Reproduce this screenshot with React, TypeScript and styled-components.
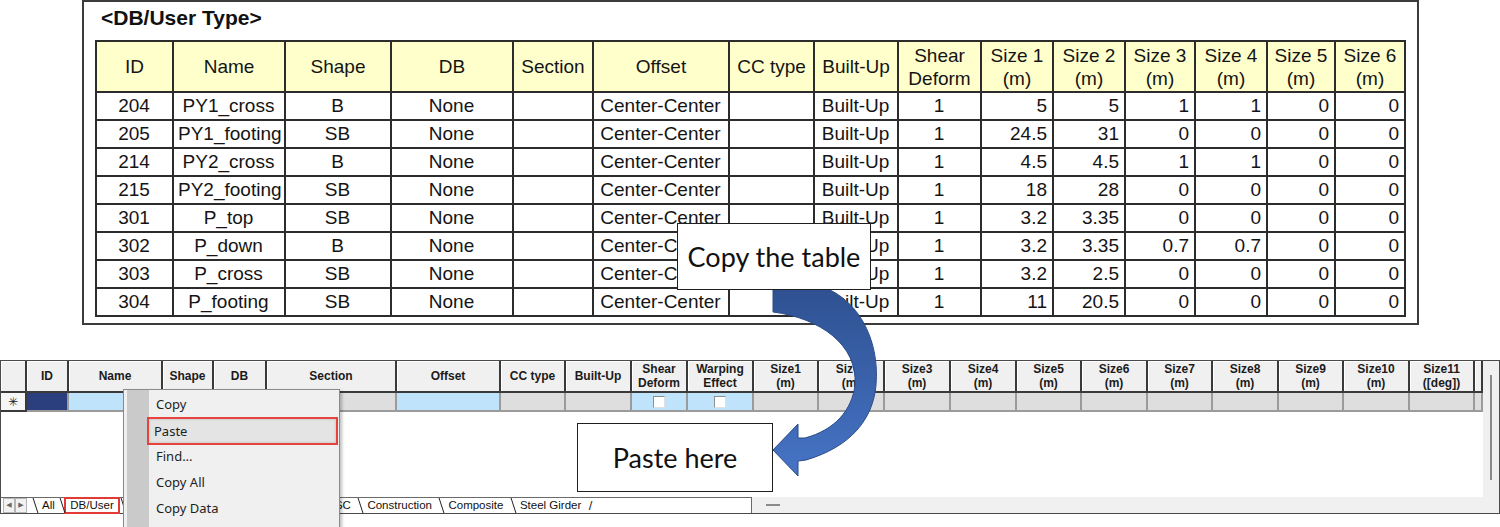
import React from "react";
import styled, { createGlobalStyle } from "styled-components";

const GlobalStyle = createGlobalStyle`
  html, body {
    margin: 0;
    padding: 0;
    background: #fff;
  }
  body {
    font-family: "Liberation Sans", Arial, sans-serif;
  }
`;

/* ---------- data ---------- */

const sampleHead: string[][] = [
  ["ID"],
  ["Name"],
  ["Shape"],
  ["DB"],
  ["Section"],
  ["Offset"],
  ["CC type"],
  ["Built-Up"],
  ["Shear", "Deform"],
  ["Size 1", "(m)"],
  ["Size 2", "(m)"],
  ["Size 3", "(m)"],
  ["Size 4", "(m)"],
  ["Size 5", "(m)"],
  ["Size 6", "(m)"],
];
const sampleWidths = [77, 112, 106, 122, 80, 136, 85, 84, 83, 72, 72, 70, 72, 68, 70];

const sampleRows: string[][] = [
  ["204", "PY1_cross", "B", "None", "", "Center-Center", "", "Built-Up", "1", "5", "5", "1", "1", "0", "0"],
  ["205", "PY1_footing", "SB", "None", "", "Center-Center", "", "Built-Up", "1", "24.5", "31", "0", "0", "0", "0"],
  ["214", "PY2_cross", "B", "None", "", "Center-Center", "", "Built-Up", "1", "4.5", "4.5", "1", "1", "0", "0"],
  ["215", "PY2_footing", "SB", "None", "", "Center-Center", "", "Built-Up", "1", "18", "28", "0", "0", "0", "0"],
  ["301", "P_top", "SB", "None", "", "Center-Center", "", "Built-Up", "1", "3.2", "3.35", "0", "0", "0", "0"],
  ["302", "P_down", "B", "None", "", "Center-Center", "", "Built-Up", "1", "3.2", "3.35", "0.7", "0.7", "0", "0"],
  ["303", "P_cross", "SB", "None", "", "Center-Center", "", "Built-Up", "1", "3.2", "2.5", "0", "0", "0", "0"],
  ["304", "P_footing", "SB", "None", "", "Center-Center", "", "Built-Up", "1", "11", "20.5", "0", "0", "0", "0"],
];

type Tone = "corner" | "navy" | "blue" | "gray" | "check";

const gridColumns: { label: string[]; width: number; tone: Tone }[] = [
  { label: [], width: 26, tone: "corner" },
  { label: ["ID"], width: 42, tone: "navy" },
  { label: ["Name"], width: 94, tone: "blue" },
  { label: ["Shape"], width: 51, tone: "gray" },
  { label: ["DB"], width: 53, tone: "gray" },
  { label: ["Section"], width: 130, tone: "gray" },
  { label: ["Offset"], width: 104, tone: "blue" },
  { label: ["CC type"], width: 65, tone: "gray" },
  { label: ["Built-Up"], width: 66, tone: "gray" },
  { label: ["Shear", "Deform"], width: 56, tone: "check" },
  { label: ["Warping", "Effect"], width: 66, tone: "check" },
  { label: ["Size1", "(m)"], width: 65, tone: "gray" },
  { label: ["Size2", "(m)"], width: 66, tone: "gray" },
  { label: ["Size3", "(m)"], width: 66, tone: "gray" },
  { label: ["Size4", "(m)"], width: 66, tone: "gray" },
  { label: ["Size5", "(m)"], width: 65, tone: "gray" },
  { label: ["Size6", "(m)"], width: 66, tone: "gray" },
  { label: ["Size7", "(m)"], width: 65, tone: "gray" },
  { label: ["Size8", "(m)"], width: 66, tone: "gray" },
  { label: ["Size9", "(m)"], width: 65, tone: "gray" },
  { label: ["Size10", "(m)"], width: 66, tone: "gray" },
  { label: ["Size11", "([deg])"], width: 65, tone: "gray" },
  { label: [], width: 8, tone: "gray" },
];
const gridTemplate = gridColumns.map((c) => `${c.width}px`).join(" ");

const sheetTabs = ["All", "DB/User", "Value", "Steel", "SRC", "Combined", "PSC", "Construction", "Composite", "Steel Girder"];

const menuItems = ["Copy", "Paste", "Find...", "Copy All", "Copy Data"];

/* ---------- page ---------- */

const Page = styled.div`
  position: relative;
  width: 1500px;
  height: 527px;
  overflow: hidden;
  background: #fff;
`;

/* ---------- sample table (top) ---------- */

const SamplePanel = styled.section`
  box-sizing: border-box;
  margin-left: 82px;
  width: 1337px;
  height: 325px;
  border: 2px solid #3c3c3c;
  padding: 4px 0 0 11px;
`;

const PanelTitle = styled.h2`
  margin: 0 0 10px 6px;
  font: bold 21px/24px "Liberation Sans", Arial, sans-serif;
  color: #111;
`;

const SampleTable = styled.table`
  border-collapse: collapse;
  table-layout: fixed;
  width: 1309px;
  font-family: "Liberation Sans", Arial, sans-serif;
  font-size: 19px;
  color: #141414;
`;

const HeadRow = styled.tr`
  height: 51px;
`;

const BodyRow = styled.tr`
  height: 28px;
`;

const HeadCell = styled.th`
  padding: 0;
  background: #ffffcc;
  border: 2px solid #2c2c2c;
  font-weight: normal;
  line-height: 23px;
  text-align: center;
`;

const BodyCell = styled.td<{ $align: "center" | "right" }>`
  padding: 0 5px 0 4px;
  border: 2px solid #2c2c2c;
  line-height: 24px;
  text-align: ${(p) => p.$align};
  white-space: nowrap;
`;

/* ---------- spreadsheet (bottom) ---------- */

const Sheet = styled.section`
  box-sizing: border-box;
  width: 1500px;
  height: 154px;
  margin-top: 35px;
  border: 1px solid #4a4a4a;
  display: flex;
  flex-direction: column;
`;

const SheetBody = styled.div`
  display: flex;
  height: 136px;
`;

const GridArea = styled.div`
  flex: 1;
  background: #fff;
`;

const GridRow = styled.div<{ $height: number }>`
  display: grid;
  grid-template-columns: ${gridTemplate};
  height: ${(p) => p.$height}px;
`;

const ColumnHead = styled.div`
  box-sizing: border-box;
  display: flex;
  align-items: center;
  justify-content: center;
  flex-direction: column;
  background: #f0f0f0;
  border-right: 2px solid #3a3a3a;
  border-bottom: 2px solid #3a3a3a;
  box-shadow: inset 1px 1px 0 #fff;
  font: bold 12px/14px "Liberation Sans", Arial, sans-serif;
  color: #1b1b1b;
  text-align: center;
`;

const toneColors: Record<Tone, string> = {
  corner: "#f6f6f6",
  navy: "#2b3f7f",
  blue: "#bee3fa",
  gray: "#dedede",
  check: "#bee3fa",
};

const InputCell = styled.div<{ $tone: Tone }>`
  box-sizing: border-box;
  display: flex;
  align-items: center;
  justify-content: center;
  background: ${(p) => toneColors[p.$tone]};
  border-right: 2px solid ${(p) => (p.$tone === "corner" ? "#3a3a3a" : "#9b9b9b")};
  border-bottom: 2px solid ${(p) => (p.$tone === "corner" ? "#3a3a3a" : "#9b9b9b")};
  font: 12px/1 "DejaVu Sans", sans-serif;
  color: #222;
`;

const CheckBox = styled.span`
  box-sizing: border-box;
  width: 12px;
  height: 12px;
  background: #fff;
  border: 1px solid #8e8e8e;
  border-right-color: #e0e0e0;
  border-bottom-color: #e0e0e0;
`;

const VScroll = styled.div`
  box-sizing: border-box;
  width: 16px;
  background: #f0f0f0;
  padding: 14px 0 0 7px;
`;

const ScrollThumb = styled.div<{ $w: number; $h: number }>`
  width: ${(p) => p.$w}px;
  height: ${(p) => p.$h}px;
  background: #8a8a8a;
`;

const SheetFooter = styled.div`
  display: flex;
  height: 16px;
`;

const TabBar = styled.div`
  box-sizing: border-box;
  width: 751px;
  display: flex;
  align-items: stretch;
  background: #fff;
  border-top: 1px solid #6a6a6a;
  border-right: 1px solid #6a6a6a;
  padding-left: 2px;
`;

const NavGroup = styled.div`
  display: flex;
  margin-right: 5px;
`;

const NavButton = styled.span`
  box-sizing: border-box;
  width: 12px;
  display: flex;
  align-items: center;
  justify-content: center;
  border: 1px solid #b5b5b5;
  background: #f2f2f2;
  font: 7px/1 "DejaVu Sans", sans-serif;
  color: #666;
`;

const SheetTab = styled.span<{ $marked?: boolean }>`
  position: relative;
  display: flex;
  align-items: center;
  padding: ${(p) => (p.$marked ? "0 5px 0 5px" : "0 6.5px 0 10px")};
  margin: ${(p) => (p.$marked ? "0 1px 0 4px" : "0")};
  font: 11.5px/1 "Liberation Sans", Arial, sans-serif;
  color: #111;
  outline: ${(p) => (p.$marked ? "2.5px solid #e23b36" : "none")};
  outline-offset: -1px;

  &::before {
    content: "";
    position: absolute;
    left: ${(p) => (p.$marked ? "-3px" : "3px")};
    top: 0;
    bottom: 0;
    width: 1px;
    background: #222;
    transform: skewX(18deg);
  }
`;

const TabEnd = styled.span`
  display: flex;
  align-items: center;
  padding-left: 1px;
  font: 13px/1 "Liberation Sans", Arial, sans-serif;
  color: #222;
`;

const HScroll = styled.div`
  flex: 1;
  display: flex;
  align-items: center;
  background: #f0f0f0;
  padding-left: 14px;
`;

/* ---------- overlays ---------- */

const ContextMenu = styled.div`
  position: absolute;
  left: 123px;
  top: 389px;
  width: 217px;
  height: 150px;
  box-sizing: border-box;
  display: flex;
  background: #f0f0f0;
  border: 1px solid #8a8a8a;
  box-shadow: 2px 2px 3px rgba(0, 0, 0, 0.25);
  z-index: 2;
`;

const MenuGutter = styled.div`
  width: 22px;
  margin-left: 3px;
  background: #cacaca;
`;

const MenuList = styled.ul`
  flex: 1;
  list-style: none;
  margin: 0;
  padding: 1px 0 0 0;
`;

const MenuItem = styled.li<{ $marked?: boolean }>`
  box-sizing: border-box;
  display: flex;
  align-items: center;
  height: ${(p) => (p.$marked ? "28px" : "26px")};
  margin: ${(p) => (p.$marked ? "0 1px -2px -2px" : "0")};
  padding-left: ${(p) => (p.$marked ? "5px" : "7px")};
  font: 13px "Noto Sans", "Open Sans", sans-serif;
  color: #1e1e1e;
  background: ${(p) => (p.$marked ? "#e4e4e4" : "transparent")};
  border: ${(p) => (p.$marked ? "2.5px solid #e5433d" : "none")};
  box-shadow: ${(p) => (p.$marked ? "inset 0 0 3px rgba(0,0,0,0.18)" : "none")};
`;

const Callout = styled.div<{ $x: number; $y: number; $w: number; $h: number }>`
  position: absolute;
  left: ${(p) => p.$x}px;
  top: ${(p) => p.$y}px;
  width: ${(p) => p.$w}px;
  height: ${(p) => p.$h}px;
  box-sizing: border-box;
  display: flex;
  align-items: center;
  justify-content: center;
  background: #fff;
  border: 1.5px solid #1f1f1f;
  font: 27px "Lato", "Open Sans", sans-serif;
  color: #111;
  z-index: 4;
`;

const FlowArrow = styled.svg`
  position: absolute;
  left: 765px;
  top: 280px;
  z-index: 3;
  overflow: visible;
`;

/* ---------- parts ---------- */

const SampleBlock = () => (
  <SamplePanel>
    <PanelTitle>&lt;DB/User Type&gt;</PanelTitle>
    <SampleTable>
      <colgroup>
        {sampleWidths.map((w, i) => (
          <col key={i} style={{ width: w }} />
        ))}
      </colgroup>
      <thead>
        <HeadRow>
          {sampleHead.map((lines, i) => (
            <HeadCell key={i}>
              {lines.map((l, j) => (
                <div key={j}>{l}</div>
              ))}
            </HeadCell>
          ))}
        </HeadRow>
      </thead>
      <tbody>
        {sampleRows.map((row, r) => (
          <BodyRow key={r}>
            {row.map((v, c) => (
              <BodyCell key={c} $align={c >= 9 ? "right" : "center"}>
                {v}
              </BodyCell>
            ))}
          </BodyRow>
        ))}
      </tbody>
    </SampleTable>
  </SamplePanel>
);

const SectionSheet = () => (
  <Sheet>
    <SheetBody>
      <GridArea>
        <GridRow $height={32}>
          {gridColumns.map((c, i) => (
            <ColumnHead key={i}>
              {c.label.map((l, j) => (
                <span key={j}>{l}</span>
              ))}
            </ColumnHead>
          ))}
        </GridRow>
        <GridRow $height={19}>
          {gridColumns.map((c, i) => (
            <InputCell key={i} $tone={c.tone}>
              {c.tone === "corner" && "✳"}
              {c.tone === "check" && <CheckBox />}
            </InputCell>
          ))}
        </GridRow>
      </GridArea>
      <VScroll>
        <ScrollThumb $w={2} $h={105} />
      </VScroll>
    </SheetBody>
    <SheetFooter>
      <TabBar>
        <NavGroup>
          <NavButton>◀</NavButton>
          <NavButton>▶</NavButton>
        </NavGroup>
        {sheetTabs.map((t) => (
          <SheetTab key={t} $marked={t === "DB/User"}>
            {t}
          </SheetTab>
        ))}
        <TabEnd>/</TabEnd>
      </TabBar>
      <HScroll>
        <ScrollThumb $w={14} $h={2} />
      </HScroll>
    </SheetFooter>
  </Sheet>
);

const App = () => (
  <Page>
    <GlobalStyle />
    <SampleBlock />
    <SectionSheet />

    <ContextMenu>
      <MenuGutter />
      <MenuList>
        {menuItems.map((m) => (
          <MenuItem key={m} $marked={m === "Paste"}>
            {m}
          </MenuItem>
        ))}
      </MenuList>
    </ContextMenu>

    <FlowArrow width="125" height="200" viewBox="765 280 125 200">
      <defs>
        <linearGradient id="arrowFill" x1="0" y1="0" x2="0" y2="1">
          <stop offset="0" stopColor="#2e5090" />
          <stop offset="1" stopColor="#4674c6" />
        </linearGradient>
      </defs>
      <path
        d="M773 284 L813 284 C858 294 880 340 876 385 C873 420 850 447 806 460 L798 461 L798 476 L773 450 L798 424 L798 438 L805 438 C835 430 852 410 855 385 C858 345 820 318 773 312 Z"
        fill="url(#arrowFill)"
        stroke="#2b4c88"
        strokeWidth="1"
      />
    </FlowArrow>

    <Callout $x={677} $y={223} $w={194} $h={67}>
      Copy the table
    </Callout>
    <Callout $x={577} $y={423} $w={196} $h={69}>
      Paste here
    </Callout>
  </Page>
);

export default App;
